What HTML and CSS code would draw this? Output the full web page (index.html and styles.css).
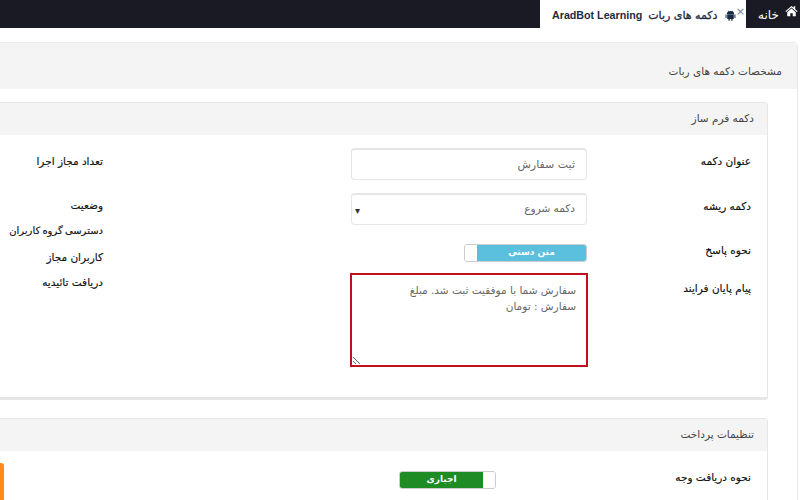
FILE: index.html
```html
<!DOCTYPE html>
<html lang="fa">

<head>
    <meta charset="UTF-8">
    <meta name="viewport" content="width=device-width, initial-scale=1.0">
    <title>AradBot Learning</title>
    <link rel="stylesheet" href="styles.css">
</head>

<body>
    <div class="tab-bar">
        <div class="tab tab-active">
            <span class="tab-title">AradBot Learning</span>
            <span class="tab-title-fa" dir="rtl">دکمه های ربات</span>
            <svg class="tab-icon" viewBox="0 0 12 12">
                <path d="M2 4.600a4 3.600 0 0 1 8 0zM.6 5h1.100v3.800H.6zM10.300 5h1.100v3.800h-1.100zM2.400 5h7.200v4.800H8.200v2H6.800v-2H5.200v2H3.800v-2H2.400z" fill="#1c2b44" />
                <path d="M3.600 .8l1 1.600M8.400 .8l-1 1.600" stroke="#1c2b44" stroke-width=".7" />
            </svg>
            <span class="tab-close">×</span>
        </div>
        <div class="tab tab-home">
            <span class="home-label" dir="rtl">خانه</span>
            <svg class="home-icon" viewBox="0 0 14 12">
                <path d="M7 .5L.4 6.300l.8.9L7 2.200l5.800 5 .8-.9L11 4V1H9.300v1.500z" fill="#fff" />
                <path d="M2.400 7.300L7 3.400l4.600 3.900v4.400H8.300V8.300H5.700v3.400H2.400z" fill="#fff" />
            </svg>
        </div>
    </div>

    <div class="page" dir="rtl">
        <div class="outer-panel">
            <div class="outer-heading">مشخصات دکمه های ربات</div>
            <div class="outer-body">
                <div class="panel panel-builder">
                    <div class="panel-heading">دکمه فرم ساز</div>
                    <div class="panel-body">
                        <div class="form-col">
                            <div class="form-row row-title">
                                <label class="form-label">عنوان دکمه</label>
                                <input type="text" class="input-field" value="ثبت سفارش">
                            </div>
                            <div class="form-row row-input">
                                <label class="form-label">دکمه ریشه</label>
                                <div class="input-field select-field">دکمه شروع<span class="select-arrow">▾</span></div>
                            </div>
                            <div class="form-row row-switch">
                                <label class="form-label label-switch">نحوه پاسخ</label>
                                <div class="switch switch-info">
                                    <span class="switch-handle"></span>
                                    <span class="switch-label">متن دستی</span>
                                </div>
                            </div>
                            <div class="form-row">
                                <label class="form-label label-message">پیام پایان فرایند</label>
                                <textarea class="message-field">سفارش شما با موفقیت ثبت شد. مبلغ
سفارش : تومان</textarea>
                            </div>
                        </div>
                        <div class="side-col">
                            <div class="side-label side-first">تعداد مجاز اجرا</div>
                            <div class="side-label">وضعیت</div>
                            <div class="side-label side-tight">دسترسی گروه کاربران</div>
                            <div class="side-label">کاربران مجاز</div>
                            <div class="side-label">دریافت تائیدیه</div>
                        </div>
                    </div>
                </div>

                <div class="panel panel-payment">
                    <div class="panel-heading">تنظیمات پرداخت</div>
                    <div class="panel-body">
                        <div class="form-col">
                            <div class="form-row">
                                <label class="form-label">نحوه دریافت وجه</label>
                                <div class="switch-slot">
                                    <div class="switch switch-success">
                                        <span class="switch-label">اجباری</span>
                                        <span class="switch-handle"></span>
                                    </div>
                                </div>
                            </div>
                        </div>
                    </div>
                </div>
            </div>
        </div>
    </div>

    <div class="orange-tab"></div>
</body>

</html>
```

FILE: styles.css
```css
body {
    margin: 0;
    width: 800px;
    height: 500px;
    overflow: hidden;
    position: relative;
    background-color: white;
    font-family: "DejaVu Sans", sans-serif;
    font-size: 10.5px;
    color: #222;
}

.tab-bar {
    height: 28px;
    background-color: #1a1a24;
    display: flex;
    justify-content: flex-end;
}

.tab {
    display: flex;
    align-items: center;
    height: 28px;
    box-sizing: border-box;
}

.tab-active {
    width: 206px;
    padding: 2px 0 0 12px;
    background-color: white;
    position: relative;
}

.tab-title {
    font-family: "Liberation Sans", sans-serif;
    font-size: 10.7px;
    font-weight: bold;
    color: #1c2b44;
    white-space: nowrap;
}

.tab-title-fa {
    margin-left: 6px;
    font-size: 11px;
    color: #1c2b44;
    -webkit-text-stroke: 0.3px #1c2b44;
    white-space: nowrap;
}

.tab-icon {
    width: 11px;
    height: 11px;
    margin-left: 7px;
    flex: none;
}

.tab-close {
    position: absolute;
    top: 6px;
    right: 1px;
    font-size: 11px;
    line-height: 11px;
    color: #6f8199;
}

.tab-home {
    width: 54px;
    padding: 0 0 0 12px;
    gap: 6px;
    color: white;
}

.home-label {
    font-size: 12px;
    margin-top: 2px;
}

.home-icon {
    width: 13px;
    height: 12px;
    flex: none;
    margin-bottom: 6px;
}

.page {
    position: absolute;
    top: 42px;
    right: 2px;
    width: 820px;
}

.outer-panel {
    border: 1px solid #e8e8e8;
    border-radius: 4px;
    background-color: white;
}

.outer-heading {
    height: 46px;
    line-height: 57px;
    padding-right: 15px;
    background-color: #f4f4f4;
    color: #444;
}

.outer-body {
    padding: 13px 29px 0 0;
}

.panel {
    border: 1px solid #e6e6e6;
    border-radius: 3px;
    background-color: white;
}

.panel-builder {
    height: 294px;
    border-bottom: 3px solid #e6e6e6;
    margin-bottom: 18px;
}

.panel-heading {
    height: 32px;
    line-height: 30px;
    padding-right: 13px;
    background-color: #f4f4f4;
    color: #444;
}

.panel-body {
    display: flex;
    justify-content: space-between;
}

.form-col {
    width: 416px;
    padding-top: 13px;
}

.form-row {
    display: flex;
}

.form-label {
    width: 180px;
    padding-right: 16px;
    box-sizing: border-box;
    flex: none;
    line-height: 26px;
    color: #111;
    -webkit-text-stroke: 0.15px #111;
}

.row-title {
    height: 45px;
}

.row-input {
    height: 44px;
}

.input-field {
    width: 236px;
    height: 32px;
    box-sizing: border-box;
    flex: none;
    border: 1px solid #e6e6e6;
    border-top-width: 2px;
    border-radius: 4px;
    padding: 0 11px;
    font: inherit;
    font-size: 11px;
    color: #666;
    background-color: white;
    line-height: 27px;
}

.select-field {
    position: relative;
    font-size: 10.5px;
}

.select-arrow {
    position: absolute;
    left: 3px;
    top: 2px;
    font-size: 10px;
    color: #333;
}

.row-switch {
    height: 36px;
    padding-top: 7px;
    box-sizing: border-box;
}

.label-switch {
    margin-top: -7px;
}

.label-message {
    padding-top: 2px;
}

.switch {
    width: 123px;
    height: 18px;
    box-sizing: border-box;
    border: 1px solid #ccc;
    border-radius: 3px;
    display: flex;
    direction: ltr;
    overflow: hidden;
    font-size: 9px;
    font-weight: bold;
    color: white;
    background-color: white;
}

.switch-label {
    flex: 1;
    text-align: center;
    line-height: 15px;
}

.switch-handle {
    width: 12px;
    flex: none;
    background-color: white;
}

.switch-info .switch-label {
    background-color: #5bc0de;
}

.switch-success {
    width: 97px;
}

.switch-success .switch-label {
    background-color: #1f8b24;
}

.message-field {
    width: 238px;
    height: 94px;
    box-sizing: border-box;
    flex: none;
    border: 2px solid #c0101a;
    padding: 7px 10px 5px;
    margin: 0 -1px 0 0;
    font: inherit;
    line-height: 16px;
    color: #666;
    background-color: white;
}

.side-col {
    width: 123px;
    padding-top: 18px;
}

.side-label {
    height: 25.8px;
    line-height: 16px;
    white-space: nowrap;
    color: #111;
    -webkit-text-stroke: 0.15px #111;
}

.side-first {
    height: 44px;
}

.side-tight {
    font-size: 10px;
    word-spacing: -1px;
}

.panel-payment {
    height: 90px;
}

.switch-slot {
    width: 236px;
    padding: 7px 91px 0 0;
    box-sizing: border-box;
    display: flex;
}

.orange-tab {
    position: absolute;
    left: 0;
    top: 463px;
    width: 4px;
    height: 37px;
    background-color: #ff8a1c;
    border-top-right-radius: 3px;
}
```
